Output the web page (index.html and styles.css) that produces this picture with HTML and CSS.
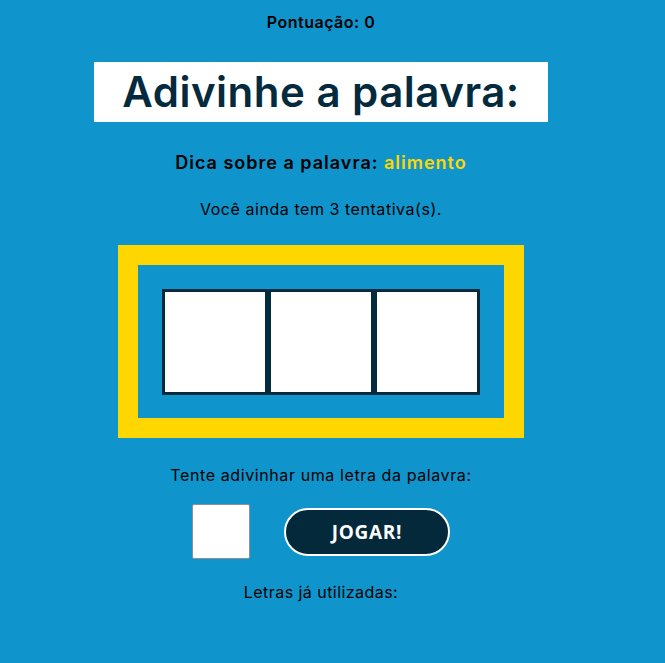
FILE: index.html
```html
<!DOCTYPE html>
<html lang="pt-BR">
<head>
<meta charset="utf-8">
<title>Adivinhe a palavra</title>
<link rel="stylesheet" href="styles.css">
</head>
<body>
<main class="game">
  <p class="score">Pontuação: 0</p>
  <h1 class="title">Adivinhe a palavra:</h1>
  <p class="hint">Dica sobre a palavra: <span class="hint-word">alimento</span></p>
  <p class="tries">Você ainda tem 3 tentativa(s).</p>
  <div class="board">
    <div class="letters">
      <div class="letter"></div>
      <div class="letter"></div>
      <div class="letter"></div>
    </div>
  </div>
  <p class="prompt">Tente adivinhar uma letra da palavra:</p>
  <div class="guess-row">
    <input class="guess-input" type="text" maxlength="1">
    <button class="play-btn" type="button">JOGAR!</button>
  </div>
  <p class="used">Letras já utilizadas:</p>
</main>
</body>
</html>
```
FILE: styles.css
```css
html, body {
  margin: 0;
  padding: 0;
  background: #0f94cc;
}
body {
  font-family: Inter, "Noto Sans", sans-serif;
  color: #000;
}
.game {
  width: 642px;
  display: flex;
  flex-direction: column;
  align-items: center;
  text-align: center;
}
.game p, .game h1 { margin: 0; }
.score {
  margin-top: 12px !important;
  line-height: 20px;
  font-size: 16px;
  font-weight: 600;
  letter-spacing: 0.5px;
}
.title {
  margin-top: 30px !important;
  width: 454px;
  height: 60px;
  line-height: 60px;
  background: #fff;
  color: #032a3d;
  font-size: 42px;
  font-weight: 600;
  letter-spacing: 0.5px;
}
.hint {
  margin-top: 29px !important;
  line-height: 24px;
  font-size: 18px;
  font-weight: 600;
  letter-spacing: 1px;
}
.hint-word { color: #ffd700; }
.tries, .prompt, .used {
  line-height: 22px;
  font-size: 16px;
  letter-spacing: 0.55px;
}
.tries { margin-top: 23px !important; }
.prompt { letter-spacing: 0.6px; }
.used { letter-spacing: 0.45px; }
.board {
  margin-top: 25px;
  border: 20px solid #ffd700;
  padding: 24px 24px 23px;
}
.letters { display: flex; }
.letter {
  width: 100px;
  height: 100px;
  background: #fff;
  border: 3px solid #032a3d;
}
.prompt { margin-top: 26px !important; }
.guess-row {
  margin-top: 18px;
  display: flex;
  align-items: center;
  gap: 34px;
}
.guess-input {
  box-sizing: border-box;
  width: 58px;
  height: 55px;
  border: 1px solid #8f8f9d;
  border-radius: 2px;
  background: #fff;
  margin: 0;
  padding: 0;
}
.play-btn {
  box-sizing: border-box;
  width: 166px;
  height: 48px;
  background: #03293a;
  color: #fff;
  border: 2px solid #fff;
  border-radius: 24px;
  font-family: "Open Sans", sans-serif;
  font-weight: 700;
  font-size: 19px;
  letter-spacing: 0.7px;
  padding: 0;
}
.used { margin-top: 22px !important; }
```
